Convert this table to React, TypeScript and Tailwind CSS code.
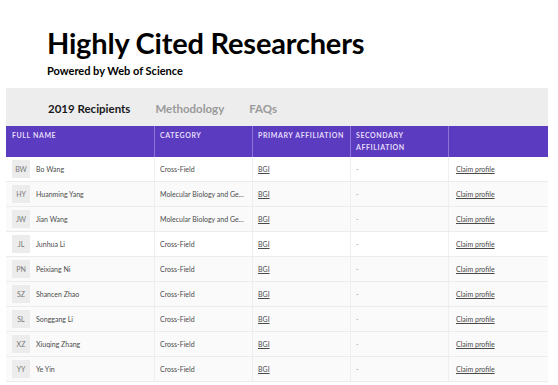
import React from "react";

const rows = [
  { i: "BW", n: "Bo Wang", c: "Cross-Field" },
  { i: "HY", n: "Huanming Yang", c: "Molecular Biology and Ge..." },
  { i: "JW", n: "Jian Wang", c: "Molecular Biology and Ge..." },
  { i: "JL", n: "Junhua Li", c: "Cross-Field" },
  { i: "PN", n: "Peixiang Ni", c: "Cross-Field" },
  { i: "SZ", n: "Shancen Zhao", c: "Cross-Field" },
  { i: "SL", n: "Songgang Li", c: "Cross-Field" },
  { i: "XZ", n: "Xiuqing Zhang", c: "Cross-Field" },
  { i: "YY", n: "Ye Yin", c: "Cross-Field" },
];

export default function App() {
  return (
    <div
      className="w-[558px] h-[385px] bg-white overflow-hidden"
      style={{ fontFamily: "Lato, 'Open Sans', sans-serif" }}
    >
      <div className="pl-[47px] pt-[26px]">
        <h1 className="text-[29px] font-bold leading-[34px] text-black tracking-[-0.2px]">
          Highly Cited Researchers
        </h1>
        <div className="text-[11px] font-bold text-black mt-[4px] leading-[14px]">
          Powered by Web of Science
        </div>
      </div>
      <div className="ml-[6px] w-[542px] mt-[10px]">
        <div className="h-[38px] bg-[#ededed] flex items-center pl-[42px] gap-[25px] text-[11.5px] font-bold pt-[4px]">
          <span className="text-[#1a1a1a]">2019 Recipients</span>
          <span className="text-[#9a9a9a]">Methodology</span>
          <span className="text-[#9a9a9a]">FAQs</span>
        </div>
        <div className="grid grid-cols-[149px_98px_98px_98px_99px] h-[31px] bg-[#5b3bbf] text-[7px] font-bold tracking-[0.6px] text-[#e4dcfb] leading-[12px]">
          <div className="border-r border-[#8d77d6] px-[6px] pt-[3px]">FULL NAME</div>
          <div className="border-r border-[#8d77d6] px-[5px] pt-[3px]">CATEGORY</div>
          <div className="border-r border-[#8d77d6] px-[5px] pt-[3px]">PRIMARY AFFILIATION</div>
          <div className="border-r border-[#8d77d6] px-[5px] pt-[3px]">
            SECONDARY
            <br />
            AFFILIATION
          </div>
          <div></div>
        </div>
        {rows.map((r, idx) => (
          <div
            key={r.i}
            className={`grid grid-cols-[149px_98px_98px_98px_99px] h-[25px] border-b border-[#ececec] text-[7px] text-[#4a4a4a] ${
              idx === 0 || idx === 3 ? "bg-white" : "bg-[#fafafa]"
            }`}
          >
            <div className="border-r border-[#efefef] flex items-center pl-[6px]">
              <div className="w-[18px] h-[18px] bg-[#ececec] flex items-center justify-center text-[#777] text-[7px]">
                {r.i}
              </div>
              <span className="ml-[6px]">{r.n}</span>
            </div>
            <div className="border-r border-[#efefef] flex items-center pl-[5px]">{r.c}</div>
            <div className="border-r border-[#efefef] flex items-center pl-[5px]">
              <span className="underline">BGI</span>
            </div>
            <div className="border-r border-[#efefef] flex items-center pl-[5px] text-[#999]">-</div>
            <div className="flex items-center pl-[7px]">
              <span className="underline">Claim profile</span>
            </div>
          </div>
        ))}
      </div>
    </div>
  );
}
